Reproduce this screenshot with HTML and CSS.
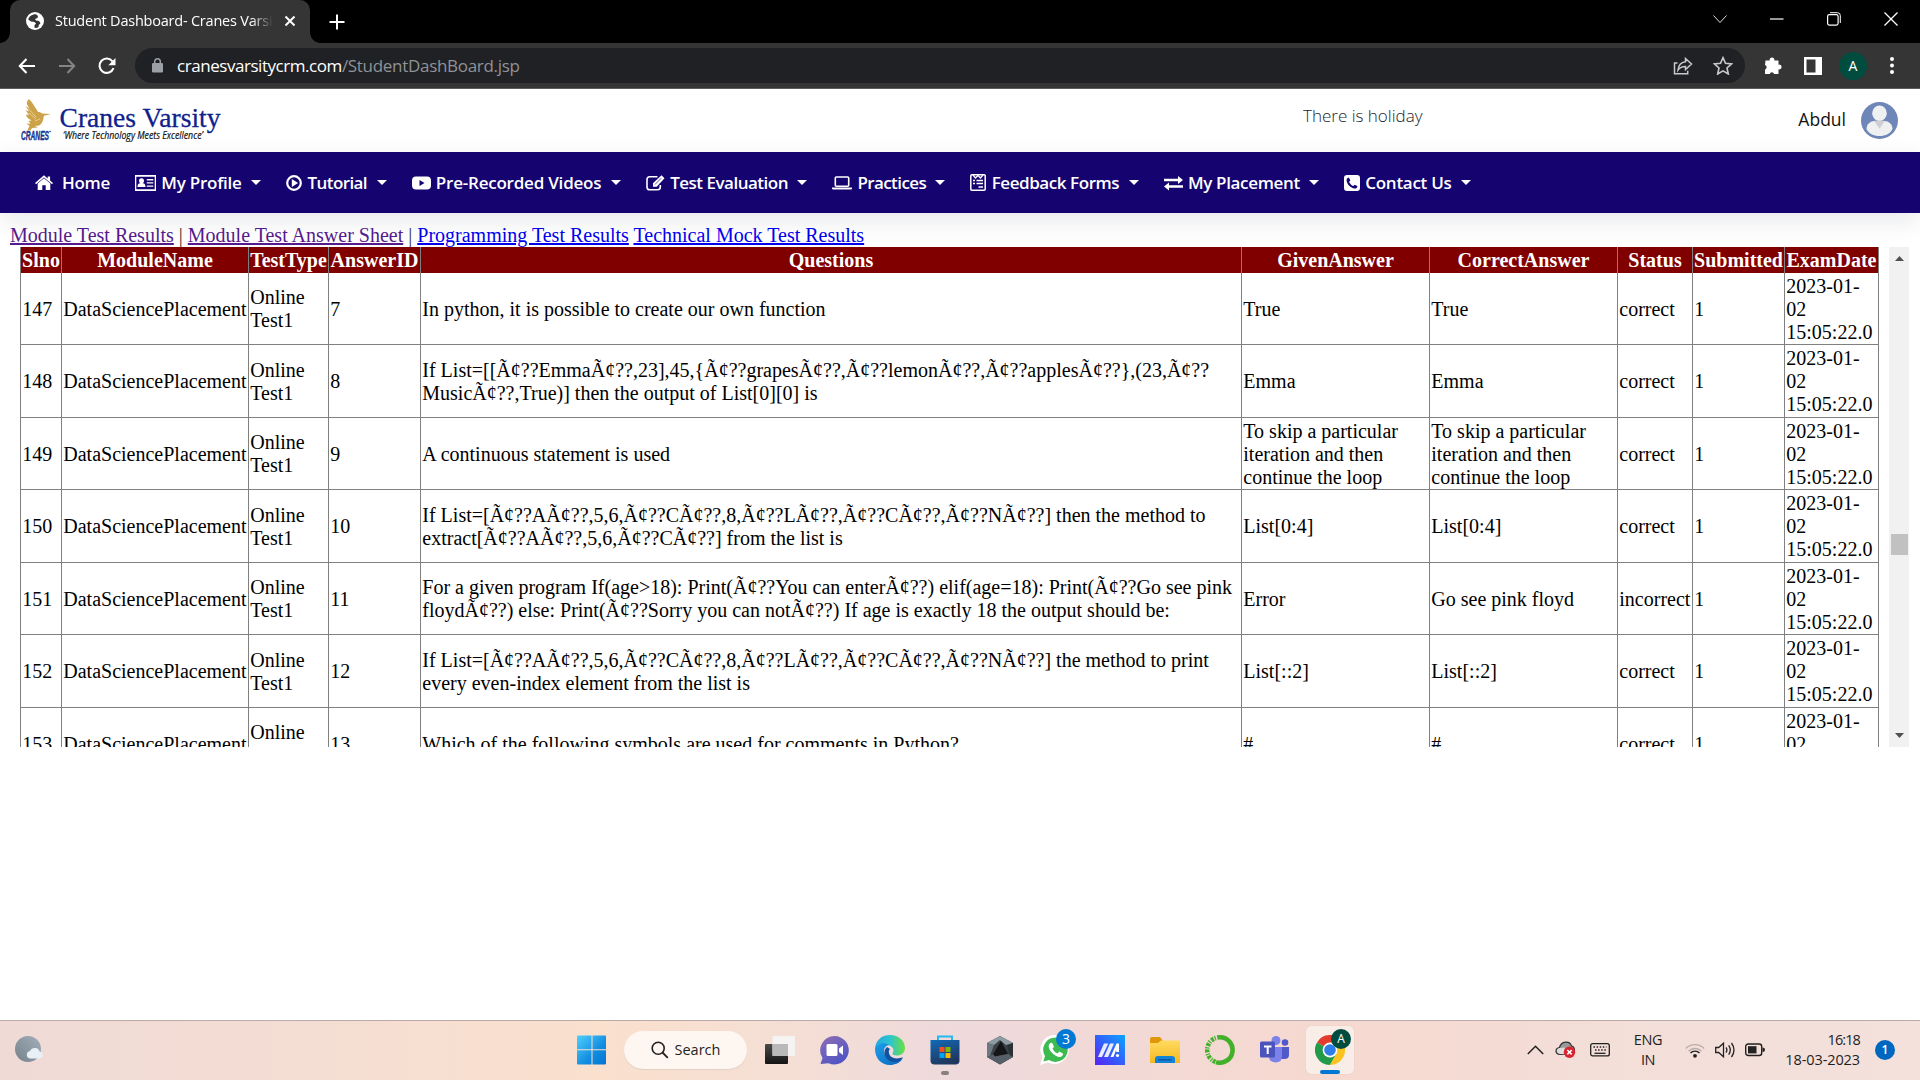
FILE: index.html
```html
<!DOCTYPE html>
<html lang="en">
<head>
<meta charset="utf-8">
<title>Student Dashboard- Cranes Varsity</title>
<link rel="stylesheet" href="styles.css">
</head>
<body>
<div class="tabstrip">
  <div class="tab">
    <svg class="favicon" width="18" height="18" viewBox="0 0 18 18"><circle cx="9" cy="9" r="9" fill="#fff"/><path d="M10 2.200C6 2 3 4.400 2.200 7.500L5 9.500l3.500.5 1.500 1.500-1.500 1.800v2.500c1.500.3 3 0 4-.8l.3-2 1.700-1.700-1.500-2.300-3-.5-1-1.500 2.500-1L12 4z" fill="#353535"/></svg>
    <span class="tab-title">Student Dashboard- Cranes Varsity</span>
    <svg class="tab-close" width="12" height="12" viewBox="0 0 12 12"><path d="M1.500 1.500l9 9M10.500 1.500l-9 9" stroke="#fff" stroke-width="2"/></svg>
  </div>
  <svg class="new-tab" width="16" height="16" viewBox="0 0 16 16"><path d="M8 .5v15M.5 8h15" stroke="#fff" stroke-width="2"/></svg>
  <div class="window-buttons">
    <svg width="14" height="14" viewBox="0 0 14 14"><path d="M.5 3.500L7 10.500l6.500-7" stroke="#ddd" fill="none"/></svg>
    <svg width="14" height="14" viewBox="0 0 14 14"><path d="M0 7h13.500" stroke="#fff" stroke-width="1.200"/></svg>
    <svg width="14" height="14" viewBox="0 0 14 14"><rect x=".6" y="2.600" width="10.500" height="10.500" rx="1.800" stroke="#fff" stroke-width="1.200" fill="none"/><path d="M3 .7h7.500q2.800 0 2.800 2.800V11" stroke="#fff" fill="none"/></svg>
    <svg width="14" height="14" viewBox="0 0 14 14"><path d="M.5.500l13 13M13.500.500l-13 13" stroke="#fff" stroke-width="1.300"/></svg>
  </div>
</div>
<div class="toolbar">
  <div class="nav-buttons">
    <svg width="18" height="16" viewBox="0 0 18 16"><path d="M17 8H2M8.500 1L1.800 8l6.700 7" stroke="#fff" stroke-width="2.100" fill="none"/></svg>
    <svg width="18" height="16" viewBox="0 0 18 16"><path d="M1 8h15M9.500 1l6.700 7-6.700 7" stroke="#858585" stroke-width="2" fill="none"/></svg>
    <svg width="18" height="18" viewBox="0 0 18 18"><path d="M15.500 11.200A7.200 7.200 0 1 1 14.600 4.500" stroke="#fff" stroke-width="2.100" fill="none"/><path d="M17.500 1v7.200h-7.200z" fill="#fff"/></svg>
  </div>
  <div class="omnibox">
    <svg class="lock" width="11" height="15" viewBox="0 0 11 15"><rect y="5" width="11" height="9.500" rx="1.200" fill="#9aa0a6"/><path d="M2.700 6V3.600a2.800 2.800 0 0 1 5.600 0V6" stroke="#9aa0a6" stroke-width="1.500" fill="none"/></svg>
    <span class="host">cranesvarsitycrm.com</span><span class="path">/StudentDashBoard.jsp</span>
    <svg class="share" width="20" height="18" viewBox="0 0 20 18"><path d="M4.500 6H1.500v10.800h13.200v-3" stroke="#c7c9cc" stroke-width="1.500" fill="none"/><path d="M12.500 1.500l6 5.500-6 5.500V9.500C9 9.500 6.800 10.500 5 13c.4-4.500 3-7.500 7.500-8.200z" stroke="#c7c9cc" stroke-width="1.500" fill="none"/></svg>
    <svg width="20" height="19" viewBox="0 0 20 19"><path d="M10 1.700l2.500 5.600 6.100.6-4.600 4.100 1.300 6L10 14.900 4.700 18 6 12 1.400 7.900l6.100-.6z" stroke="#c7c9cc" stroke-width="1.600" fill="none"/></svg>
  </div>
  <div class="extensions">
    <svg width="18" height="18" viewBox="0 0 18 18"><path d="M1.500 3.500h4.200a2.400 2.400 0 1 1 4.600 0h4.200v4.200a2.400 2.400 0 1 1 0 4.600V17h-4.400a2.300 2.300 0 0 0-4.400 0H1v-4.600a2.300 2.300 0 0 0 0-4.400z" fill="#fff"/></svg>
    <svg width="18" height="18" viewBox="0 0 18 18"><path d="M0 0h18v18H0zM2.500 2.500v13h9v-13z" fill="#fff" fill-rule="evenodd"/></svg>
    <span class="profile">A</span>
    <svg width="4" height="17" viewBox="0 0 4 17"><circle cx="2" cy="2" r="2" fill="#fff"/><circle cx="2" cy="8.500" r="2" fill="#fff"/><circle cx="2" cy="15" r="2" fill="#fff"/></svg>
  </div>
</div>

<header class="brand-bar">
  <svg class="logo" width="210" height="60" viewBox="0 0 210 60">
    <path d="M9 9c3 3 6 8 9 13 2 0 3 .5 4 1.500l9 .5-7 1.800c-1 3.200-.5 5.500-3 8.200-2 2.300-4 1.500-6 2l3 1.500-6 .5-1.500 2.500-3-.5 2-4-3-2.500 4 .2-2-2.700 3-.4c-3-2-5-3-5.500-6l3 .5-3.500-5 3.500 1.500-3-5 3.200 1.500C5.500 13 7 11 9 9z" fill="#cda349"/><path d="M8 18l8 9M9 23l7 6M15 31l5-2" stroke="#e9d7a8" stroke-width=".8"/>
    <text x="1" y="50" class="logo-mark" textLength="28" lengthAdjust="spacingAndGlyphs">CRANES</text>
    <circle cx="30" cy="41.500" r=".8" fill="#153391"/>
    <text x="39.500" y="36.500" class="logo-name" textLength="161" lengthAdjust="spacingAndGlyphs">Cranes Varsity</text>
    <text x="43" y="49" class="logo-tag" textLength="140" lengthAdjust="spacingAndGlyphs">‘Where Technology Meets Excellence’</text>
  </svg>
  <div class="marquee">There is holiday</div>
  <div class="user">
    <span>Abdul</span>
    <svg width="37" height="37" viewBox="0 0 37 37"><circle cx="18.500" cy="18.500" r="18.500" fill="#6f86b9"/><ellipse cx="18.500" cy="11.300" rx="7.300" ry="7.800" fill="#eef0f2"/><path d="M5.500 27c0-5 4-8 8-8h10c4 0 8 3 8 8-2 4.500-7 7-13 7s-11-2.500-13-7z" fill="#eef0f2"/><path d="M13 18.800h11l-5.500 8z" fill="#cfcfd1"/></svg>
  </div>
</header>

<nav class="menu">
  <a class="item home"><svg width="18" height="16" viewBox="0 0 18 16"><path d="M9 3.200l6.300 5.400V15h-4.600v-4.700H7.300V15H2.700V8.600z"/><path d="M9 .3l3.700 3.200V1.500h2.400v4.100L18 8.100l-1 1.200-8-6.900-8 6.900L0 8.100z"/></svg><span>Home</span></a>
  <a class="item prof"><svg width="21" height="16" viewBox="0 0 21 16"><path d="M0 0h21v16H0zM1.300 1.800v12.400h18.400V1.800z" fill-rule="evenodd"/><circle cx="6.500" cy="5.800" r="2.500"/><path d="M2.500 12c0-3.200 1.500-4 4-4s4 .8 4 4zM11.800 4h6.500v1.400h-6.500zM11.800 7.200h6.500v1.400h-6.500zM11.800 10.400h6.500v1.400h-6.500z"/></svg><span>My Profile</span><i></i></a>
  <a class="item tuto"><svg width="16" height="16" viewBox="0 0 16 16"><circle cx="8" cy="8" r="6.800" fill="none" stroke="#fff" stroke-width="2.200"/><path d="M5.800 4l6.300 4-6.300 4z"/></svg><span>Tutorial</span><i></i></a>
  <a class="item vide"><svg width="19" height="16" viewBox="0 0 19 16"><path d="M4 1.500h11q4 0 4 4v5q0 4-4 4H4q-4 0-4-4v-5q0-4 4-4zM7.500 5v6l5-3z" fill-rule="evenodd"/></svg><span>Pre-Recorded Videos</span><i></i></a>
  <a class="item eval"><svg width="19" height="16" viewBox="0 0 19 16"><path d="M11.500 1.800H3.800Q1 1.800 1 4.600v7.300Q1 14.800 3.800 14.800h7.700q2.800 0 2.800-2.800v-2" fill="none" stroke="#fff" stroke-width="1.600"/><path d="M15.500.3l3 3-7.800 8.400H7V8.300z"/><path d="M9 9.500l6.200-6.300" stroke="#15036f" stroke-width=".7"/></svg><span>Test Evaluation</span><i></i></a>
  <a class="item prac"><svg width="20" height="16" viewBox="0 0 20 16"><rect x="3.300" y="2" width="13.400" height="9.300" rx="1" fill="none" stroke="#fff" stroke-width="1.600"/><path d="M0 12.500h20v1.200q0 .8-1.500.8h-17Q0 14.500 0 13.700z"/></svg><span>Practices</span><i></i></a>
  <a class="item feed"><svg width="16" height="17" viewBox="0 0 16 17"><rect x=".8" y=".8" width="14.400" height="15.400" rx="1" fill="none" stroke="#fff" stroke-width="1.500"/><path d="M3 1l2.500 3L8 1.500 10.500 4 13 1M3 6.500h2M6.500 6.500H13M3 9.500h2M6.500 9.500H13M8.500 13H13" fill="none" stroke="#fff" stroke-width="1.300"/></svg><span>Feedback Forms</span><i></i></a>
  <a class="item plac"><svg width="19" height="16" viewBox="0 0 19 16"><path d="M0 3.800h14V1l5 4-5 4V6.200H0zM19 10.300H5V7.500l-5 4 5 4v-2.800h14z"/></svg><span>My Placement</span><i></i></a>
  <a class="item cont"><svg width="16" height="16" viewBox="0 0 16 16"><path d="M3 0h10q3 0 3 3v10q0 3-3 3H3q-3 0-3-3V3q0-3 3-3zM4.800 2.500C3 3 2.500 4 2.600 5.500c.5 4 4 7.500 8 8 1.500.1 2.500-.8 2.900-2.300L10.800 9.700 9.300 11C7.500 10.200 6 8.700 5.100 6.900L6.300 5.300z" fill-rule="evenodd"/></svg><span>Contact Us</span><i></i></a>
</nav>

<main class="page">
  <div class="links"><a class="visited">Module Test Results</a> | <a class="visited">Module Test Answer Sheet</a> | <a>Programming Test Results</a> <a>Technical Mock Test Results</a></div>
  <div class="scroller">
    <table class="results">
      <colgroup><col class="c-sl"><col class="c-mod"><col class="c-type"><col class="c-aid"><col class="c-q"><col class="c-ans"><col class="c-ans"><col class="c-st"><col class="c-sub"><col class="c-date"></colgroup>
      <thead><tr><th>Slno</th><th>ModuleName</th><th>TestType</th><th>AnswerID</th><th>Questions</th><th>GivenAnswer</th><th>CorrectAnswer</th><th>Status</th><th>Submitted</th><th>ExamDate</th></tr></thead>
      <tbody>
        <tr><td>147</td><td>DataSciencePlacement</td><td>Online<br>Test1</td><td>7</td><td>In python, it is possible to create our own function</td><td>True</td><td>True</td><td>correct</td><td>1</td><td>2023-01-<br>02<br>15:05:22.0</td></tr>
        <tr><td>148</td><td>DataSciencePlacement</td><td>Online<br>Test1</td><td>8</td><td>If List=[[Ã¢??EmmaÃ¢??,23],45,{Ã¢??grapesÃ¢??,Ã¢??lemonÃ¢??,Ã¢??applesÃ¢??},(23,Ã¢??<br>MusicÃ¢??,True)] then the output of List[0][0] is</td><td>Emma</td><td>Emma</td><td>correct</td><td>1</td><td>2023-01-<br>02<br>15:05:22.0</td></tr>
        <tr><td>149</td><td>DataSciencePlacement</td><td>Online<br>Test1</td><td>9</td><td>A continuous statement is used</td><td>To skip a particular<br>iteration and then<br>continue the loop</td><td>To skip a particular<br>iteration and then<br>continue the loop</td><td>correct</td><td>1</td><td>2023-01-<br>02<br>15:05:22.0</td></tr>
        <tr><td>150</td><td>DataSciencePlacement</td><td>Online<br>Test1</td><td>10</td><td>If List=[Ã¢??AÃ¢??,5,6,Ã¢??CÃ¢??,8,Ã¢??LÃ¢??,Ã¢??CÃ¢??,Ã¢??NÃ¢??] then the method to<br>extract[Ã¢??AÃ¢??,5,6,Ã¢??CÃ¢??] from the list is</td><td>List[0:4]</td><td>List[0:4]</td><td>correct</td><td>1</td><td>2023-01-<br>02<br>15:05:22.0</td></tr>
        <tr><td>151</td><td>DataSciencePlacement</td><td>Online<br>Test1</td><td>11</td><td>For a given program If(age&gt;18): Print(Ã¢??You can enterÃ¢??) elif(age=18): Print(Ã¢??Go see pink<br>floydÃ¢??) else: Print(Ã¢??Sorry you can notÃ¢??) If age is exactly 18 the output should be:</td><td>Error</td><td>Go see pink floyd</td><td>incorrect</td><td>1</td><td>2023-01-<br>02<br>15:05:22.0</td></tr>
        <tr><td>152</td><td>DataSciencePlacement</td><td>Online<br>Test1</td><td>12</td><td>If List=[Ã¢??AÃ¢??,5,6,Ã¢??CÃ¢??,8,Ã¢??LÃ¢??,Ã¢??CÃ¢??,Ã¢??NÃ¢??] the method to print<br>every even-index element from the list is</td><td>List[::2]</td><td>List[::2]</td><td>correct</td><td>1</td><td>2023-01-<br>02<br>15:05:22.0</td></tr>
        <tr><td>153</td><td>DataSciencePlacement</td><td>Online<br>Test1</td><td>13</td><td>Which of the following symbols are used for comments in Python?</td><td>#</td><td>#</td><td>correct</td><td>1</td><td>2023-01-<br>02<br>15:05:22.0</td></tr>
      </tbody>
    </table>
    <div class="scrollbar">
      <svg width="9" height="5" viewBox="0 0 9 5"><path d="M0 5L4.500 0 9 5z" fill="#505050"/></svg>
      <div class="thumb"></div>
      <svg width="9" height="5" viewBox="0 0 9 5"><path d="M0 0L4.500 5 9 0z" fill="#505050"/></svg>
    </div>
  </div>
</main>

<footer class="taskbar">
  <svg class="weather" width="29" height="27" viewBox="0 0 29 27"><defs><linearGradient id="w" x1="1" y1="0" x2="0" y2="1"><stop offset="0" stop-color="#a3b0ba"/><stop offset="1" stop-color="#75818b"/></linearGradient></defs><circle cx="13" cy="13" r="13" fill="url(#w)"/><path d="M15 22.500a3.800 3.800 0 0 1 0-7.500 5.300 5.300 0 0 1 9.800.8 3.400 3.400 0 0 1 .2 6.700z" fill="#e9f0f5"/></svg>
  <div class="apps">
    <svg class="app" width="30" height="30" viewBox="0 0 30 30"><defs><linearGradient id="s" x1="0" y1="0" x2="1" y2="1"><stop offset="0" stop-color="#4fd0ff"/><stop offset=".6" stop-color="#138de0"/><stop offset="1" stop-color="#0473d2"/></linearGradient></defs><path d="M1 .5h13.500v13.800H0V1.500q0-1 1-1zM15.500.500H28q1 0 1 1v12.800H15.500zM0 15.300h14.500v14.200H1q-1 0-1-1zM15.500 15.300H29v13.200q0 1-1 1H15.500z" fill="url(#s)"/></svg>
    <div class="search"><svg width="18" height="18" viewBox="0 0 18 18"><circle cx="7.200" cy="7.200" r="6" fill="none" stroke="#222" stroke-width="1.600"/><path d="M11.500 11.500l5.300 5.300" stroke="#222" stroke-width="1.800"/></svg><span>Search</span></div>
    <svg class="app" width="30" height="30" viewBox="0 0 30 30"><defs><linearGradient id="tv" x1="0" y1="0" x2="0" y2="1"><stop offset="0" stop-color="#4a4a48"/><stop offset="1" stop-color="#141414"/></linearGradient></defs><rect y="9" width="23" height="20" rx="1" fill="url(#tv)"/><rect x="7.500" y="1" width="22.500" height="20" rx="1" fill="#f6f4f2"/><path d="M7.500 9H23v12H7.500z" fill="#b9b9b9"/></svg>
    <svg class="app" width="30" height="30" viewBox="0 0 30 30"><defs><linearGradient id="ch" x1="0" y1="0" x2=".6" y2="1"><stop offset="0" stop-color="#8f6fb5"/><stop offset="1" stop-color="#5054c4"/></linearGradient></defs><path d="M14.500 1a14.300 14.300 0 1 1-6 27.300L.5 29l2-6A14.300 14.300 0 0 1 14.500 1z" fill="url(#ch)"/><rect x="6.500" y="9" width="11" height="12" rx="1.500" fill="#fff"/><path d="M19 13.500l4-3v9.500l-4-3z" fill="#fff"/></svg>
    <svg class="app" width="30" height="30" viewBox="0 0 30 30"><defs><linearGradient id="e1"><stop offset="0" stop-color="#25a8e0"/><stop offset=".5" stop-color="#2bc4cf"/><stop offset="1" stop-color="#6ce03f"/></linearGradient><linearGradient id="e2" x1="0" y1="0" x2="1" y2="1"><stop offset="0" stop-color="#1c9fe8"/><stop offset="1" stop-color="#0c66bf"/></linearGradient></defs><path d="M0 15C0 6 6 0 15 0s15 6 15 13c0 5-4 7.500-8 7.500-3.500 0-5-1-4.500-2.500 2-2 1-6-3-7.500C8 8.500 2 11 0 15z" fill="url(#e1)"/><path d="M0 14C2 8 10 6.500 14 10c-6 1-6 8-3 12 4 5 11 5 17 1-3 5-8 7-13 7C6 30 0 23 0 14z" fill="url(#e2)"/><path d="M12 12c-6 6-1 15 8 15 3 0 6-1.500 8-5-7 3-13 1-14-4-.5-2 0-3 1-4z" fill="#1152a0"/></svg>
    <div class="app running"><svg width="30" height="30" viewBox="0 0 30 30"><defs><linearGradient id="st" x1="0" y1="0" x2=".4" y2="1"><stop offset="0" stop-color="#116bb9"/><stop offset="1" stop-color="#20375f"/></linearGradient></defs><path d="M8 5V1.500h14V5" fill="none" stroke="#26b9ef" stroke-width="2"/><path d="M.5 5h29v20.500q0 4-4 4h-21q-4 0-4-4z" fill="url(#st)"/><path d="M9.500 12h5v5h-5z" fill="#f25022"/><path d="M15.500 12h5v5h-5z" fill="#7fba00"/><path d="M9.500 18h5v5h-5z" fill="#00a4ef"/><path d="M15.500 18h5v5h-5z" fill="#ffb900"/></svg></div>
    <svg class="app" width="30" height="30" viewBox="0 0 30 30"><path d="M15 1l13 7v14l-13 7.500L2 22V8z" fill="#3b4147"/><path d="M15 1l13 7-7 2-6-5-6 5-7-2z" fill="#8f9ba4"/><path d="M2 8l7 2-4 11-3 1z" fill="#6d7881"/><path d="M28 8l-6 2.500 3 10.500 3 1z" fill="#2c3136"/><path d="M16 6l7 13-13 2.500-2-2z" fill="#131518"/><path d="M8 19.500L2 22l13 7.500 13-7.500-5-3-13 2.500z" fill="#565f67"/></svg>
    <div class="app"><svg width="30" height="30" viewBox="0 0 30 30"><path d="M15.500 0A14.500 14.500 0 1 1 8 27.500L0 30l2.500-8A14.500 14.500 0 0 1 15.500 0z" fill="#fff"/><path d="M15.500 2.500A12.200 12.200 0 1 1 9 25l-5.500 1.500L5 21A12.200 12.200 0 0 1 15.500 2.500z" fill="#3dbb50"/><path d="M10.500 8c-3 2-2 6 1.500 9.800 4 4.200 8.500 5.500 10.500 2.700 1-1.500.6-2-.5-2.600l-2.700-1.300-1.800 1.800c-2.500-1-4-2.500-5-4.800l1.500-1.600-1.300-3.200c-.5-1-1.200-1.200-2.200-.8z" fill="#fff"/></svg><b class="badge">3</b></div>
    <svg class="app" width="30" height="30" viewBox="0 0 30 30"><defs><linearGradient id="ma" x1="0" y1="1" x2="1" y2="0"><stop offset="0" stop-color="#5a20f5"/><stop offset="1" stop-color="#0aa4ff"/></linearGradient></defs><path d="M0 0h30v30H0z" fill="url(#ma)"/><path d="M3 22L9 8.500h4.200L7 22zM9 22l6-13.500h4L13 22z" fill="#e9ecff"/><path d="M15.500 22l6-13.500H24V17h-2.800v-2.500L18.500 22z" fill="#fff"/><circle cx="22.500" cy="20.500" r="1.600" fill="#fff"/></svg>
    <svg class="app" width="30" height="30" viewBox="0 0 30 30"><defs><linearGradient id="fo" x1="0" y1="0" x2="0" y2="1"><stop offset="0" stop-color="#ffda60"/><stop offset="1" stop-color="#f5b91f"/></linearGradient></defs><path d="M0 4q0-2 2-2h8l3 4-4 4H0z" fill="#e0980b"/><path d="M0 8h8l3-2.500h17q2 0 2 2V28H0z" fill="url(#fo)"/><path d="M5 28v-4q0-3 3-3h14q3 0 3 3v4z" fill="#1583d5"/><path d="M8.500 24.800h13" stroke="#0a4d94" stroke-width="1.200"/></svg>
    <svg class="app" width="30" height="30" viewBox="0 0 30 30"><path d="M15 2.300a12.700 12.700 0 1 1-4 24.800" fill="none" stroke="#43b02a" stroke-width="4.600"/><path d="M15 2.300A12.700 12.700 0 0 0 11 27.100" fill="none" stroke="#43b02a" stroke-width="4.600" stroke-dasharray="2.800 1.500 1.200 1"/></svg>
    <svg class="app" width="30" height="30" viewBox="0 0 30 30"><circle cx="25" cy="7.500" r="3.300" fill="#5059c9"/><circle cx="16" cy="5.500" r="4.500" fill="#7b83eb"/><path d="M20 12h9v8q0 4-4.500 4H20z" fill="#5059c9"/><path d="M9 12h13v9q0 6.500-6.500 6.500T9 21z" fill="#7b83eb"/><rect y="6.500" width="15" height="16" rx="1.500" fill="#4b53bc"/><path d="M4 10.500h7.500v2H8.700v6.500H6.700v-6.500H4z" fill="#fff"/></svg>
    <div class="app active"><svg width="30" height="30" viewBox="0 0 30 30"><path d="M15 15L2 7.500A15 15 0 0 1 28 7.500z" fill="#e33b2e"/><path d="M2 7.500A15 15 0 0 0 15 30l6.500-11.200L15 15z" fill="#219a4a"/><path d="M15 7.500h13A15 15 0 0 1 15 30l6.500-11.200z" fill="#fcc31e"/><circle cx="15" cy="15" r="7.400" fill="#fff"/><circle cx="15" cy="15" r="5.800" fill="#2f7de9"/></svg><b class="badge account">A</b></div>
  </div>
  <div class="tray">
    <svg class="chev" width="17" height="10" viewBox="0 0 17 10"><path d="M.8 9L8.500 1.200 16.200 9" fill="none" stroke="#222" stroke-width="1.500"/></svg>
    <svg class="cloud" width="21" height="17" viewBox="0 0 21 17"><path d="M5 13.500C-.5 13 0 7 4.500 6.500 6-.5 15-.5 16.500 5q3 .5 3 4.500l-5 4z" fill="#999" stroke="#333" stroke-width="1.200"/><path d="M5 13C1 12 1 8 4.500 7l5-.5 4 7z" fill="#ddd"/><circle cx="14.500" cy="11.200" r="5.700" fill="#da2430"/><path d="M12.300 9l4.400 4.400M16.700 9l-4.400 4.400" stroke="#fff" stroke-width="1.500"/></svg>
    <svg class="kbd" width="20" height="14" viewBox="0 0 20 14"><rect x=".7" y=".7" width="18.600" height="12.200" rx="2" fill="none" stroke="#222" stroke-width="1.300"/><path d="M3.500 4h13M5 7h11" stroke="#222" stroke-width="1.500" stroke-dasharray="1.500 1.600"/><path d="M4.500 10.300h11" stroke="#222" stroke-width="1.300"/></svg>
    <div class="lang">ENG<br>IN</div>
    <svg class="wifi" width="20" height="16" viewBox="0 0 20 16"><path d="M.8 6.500a13 13 0 0 1 18.400 0M3.500 9.300a9 9 0 0 1 13 0" fill="none" stroke="#b9adaa" stroke-width="1.300"/><path d="M5.500 11a6.300 6.300 0 0 1 9 0" fill="none" stroke="#222" stroke-width="1.400"/><circle cx="10" cy="13.800" r="1.900" fill="#222"/></svg>
    <svg class="vol" width="20" height="16" viewBox="0 0 20 16"><path d="M.7 5.500h3L8.500 1.200v13.600L3.700 10.500h-3z" fill="none" stroke="#222" stroke-width="1.300"/><path d="M11 5.500q1.800 2.500 0 5M13.700 3.300q3.200 4.700 0 9.400M16.500 1q5 7 0 14" fill="none" stroke="#222" stroke-width="1.300"/></svg>
    <svg class="batt" width="20" height="14" viewBox="0 0 20 14"><rect x=".7" y="1" width="16" height="11.500" rx="2.500" fill="none" stroke="#222" stroke-width="1.400"/><rect x="3" y="3.200" width="8.500" height="7.200" fill="#222"/><path d="M17.500 4.500q2.500 0 2.500 2.300T17.500 9z" fill="#222"/></svg>
    <div class="clock"><span class="time">16:18</span><span>18-03-2023</span></div>
    <b class="count">1</b>
  </div>
</footer>
</body>
</html>
```
FILE: styles.css
```css
* { box-sizing: border-box; }
svg { display: block; flex: none; }
body {
  margin: 0;
  width: 1920px;
  height: 1080px;
  overflow: hidden;
  display: flex;
  flex-direction: column;
  background: #fff;
  font-family: "Open Sans", "Noto Sans", sans-serif;
}

/* browser chrome */
.tabstrip { height: 43px; flex: none; background: #000; display: flex; align-items: center; padding-left: 10px; }
.tab {
  width: 300px; height: 43px; background: #353535; border-radius: 10px 10px 0 0;
  display: flex; align-items: center; padding: 0 14px 0 16px; position: relative;
}
.tab > * { margin-bottom: 2px; }
.tab::before, .tab::after {
  content: ""; position: absolute; bottom: 0; width: 10px; height: 10px; margin: 0;
}
.tab::before { left: -10px; background: radial-gradient(circle at 0 0, #000 9.5px, #353535 10px); }
.tab::after { right: -10px; background: radial-gradient(circle at 100% 0, #000 9.5px, #353535 10px); }
.tab-title {
  flex: 1; margin: 0 11px 2px 11px; overflow: hidden; white-space: nowrap; color: #fff;
  font-size: 14.5px; letter-spacing: -0.22px; line-height: 22px;
  -webkit-mask-image: linear-gradient(90deg, #000 90%, transparent);
  mask-image: linear-gradient(90deg, #000 90%, transparent);
}
.new-tab { margin-left: 19px; }
.window-buttons { margin-left: auto; display: flex; gap: 43px; padding-right: 22px; margin-bottom: 6px; }
.toolbar {
  height: 46px; flex: none; background: #353535; border-bottom: 1px solid #5c5c5c;
  display: flex; align-items: center;
}
.nav-buttons { display: flex; align-items: center; gap: 22px; padding-left: 18px; width: 135px; }
.omnibox {
  width: 1610px; height: 35px; border-radius: 18px; background: #202124;
  display: flex; align-items: center; padding: 0 12px 0 17px; font-size: 17px; color: #8f9398;
}
.lock { margin-right: 14px; }
.host { color: #fff; letter-spacing: -0.45px; }
.path { letter-spacing: -0.3px; }
.share { margin-left: auto; margin-right: 20px; }
.extensions { display: flex; align-items: center; padding-left: 19px; gap: 22px; }
.profile {
  width: 28px; height: 28px; border-radius: 50%; background: #004d40; color: #fff;
  font-size: 14px; line-height: 28px; text-align: center; margin: 0 1px 0 -5px;
}

/* site header */
.brand-bar { height: 63px; flex: none; display: flex; align-items: center; padding: 0 22px 0 20px; }
.logo { margin-top: -1px; }
.logo-mark { font: italic bold 12px "Liberation Sans", sans-serif; fill: #153391; stroke: #153391; stroke-width: .4px; }
.logo-name { font: 28px "Liberation Serif", serif; fill: #10218b; stroke: #10218b; stroke-width: .3px; }
.logo-tag { font: italic 10.5px "Open Sans", sans-serif; fill: #111; stroke: #111; stroke-width: .2px; }
.marquee {
  margin-left: 1073px; width: 120px; overflow: hidden; white-space: nowrap;
  font-size: 17px; font-weight: 300; color: #212529; line-height: 24px; margin-bottom: 9px;
}
.user { margin-left: auto; display: flex; align-items: center; gap: 15px; font-size: 17.5px; color: #111; }
.user span { margin-bottom: 4px; }

.menu {
  height: 61px; flex: none; background: #15036f; color: #fff; display: flex; align-items: center; gap: 25px;
  padding-left: 35px; font-size: 17px; font-weight: 600; box-shadow: 0 8px 24px rgba(30, 40, 60, .1);
}
.item { display: flex; align-items: center; gap: 5.3px; fill: #fff; height: 24px; line-height: 24px; white-space: nowrap; }
.item i { border: 5px solid transparent; border-top-color: #fff; border-bottom: 0; margin-left: 4.7px; }
.home { gap: 9px; }
.home span { width: 48px; letter-spacing: -0.3px; }
.prof span { width: 80px; letter-spacing: -0.25px; }
.tuto span { width: 59px; letter-spacing: -0.6px; }
.vide span { width: 165px; letter-spacing: -0.22px; }
.eval span { width: 117px; letter-spacing: -0.5px; }
.prac span { width: 68px; letter-spacing: -0.6px; }
.feed span { width: 127px; letter-spacing: -0.43px; }
.plac span { width: 111px; letter-spacing: -0.35px; }
.cont span { width: 86px; letter-spacing: -0.28px; }

/* results */
.page { flex: 1; font: 20px/23px "Liberation Serif", serif; color: #000; }
.links { padding: 11px 0 0 10px; height: 34px; color: #333; }
.links a { color: #0000ee; text-decoration: underline; }
.links a.visited { color: #551a8b; }
.scroller { height: 500px; overflow: hidden; display: flex; justify-content: space-between; padding: 0 11px 0 20px; }
.results { table-layout: fixed; width: 1859px; border-collapse: separate; border-spacing: 0; border-left: 1px solid #808080; align-self: flex-start; }
.c-sl { width: 41px; } .c-mod { width: 187px; } .c-type { width: 80px; } .c-aid { width: 92px; }
.c-q { width: 821px; } .c-ans { width: 188px; } .c-st { width: 75px; } .c-sub { width: 92px; } .c-date { width: 94px; }
.results th { height: 26px; padding: 0; background: #800000; color: #fff; border-right: 1px solid #808080; white-space: nowrap; }
.results td { height: 73px; padding: 1px 0 0 1.3px; border-right: 1px solid #808080; border-bottom: 1px solid #808080; white-space: nowrap; }
.results tbody tr:nth-child(odd) td { height: 72px; }
.scrollbar { width: 20px; background: #f1f1f1; display: flex; flex-direction: column; align-items: center; padding: 9px 0; }
.thumb { width: 17px; height: 21px; background: #c1c1c1; margin: 273px 0 auto; }

/* taskbar */
.taskbar {
  height: 60px; flex: none; border-top: 1px solid #b9aba7; position: relative;
  background: linear-gradient(90deg, #efdad6 0, #f4ddd3 300px, #fae0cd 600px, #f4ded5 800px, #eed9dc 960px, #f3d9d5 1130px, #f6d9d0 1350px, #f3ded8 1600px, #f4e1dc 1920px);
  display: flex; align-items: center; padding: 0 25px 2px 15px;
}
.weather { margin-right: 533px; }
.apps { display: flex; align-items: center; gap: 25px; }
.app { width: 30px; height: 30px; position: relative; }
.search {
  width: 123px; height: 38px; border-radius: 19px; background: #fef6f1; box-shadow: 0 1px 1px #e2cfc3;
  display: flex; align-items: center; justify-content: center; gap: 6px; font-size: 14.5px; color: #1f1f1f; margin: 0 -7px 0 -8px;
}
.running::after { content: ""; position: absolute; left: 11px; top: 36px; width: 8px; height: 4px; border-radius: 2px; background: #8a8080; }
.badge {
  position: absolute; left: 16px; top: -6px; width: 20px; height: 20px; border-radius: 50%;
  background: #0078d4; color: #fff; font: 14px/20px "Open Sans", sans-serif; text-align: center;
}
.account { background: #004d40; font-size: 12px; }
.active::before { content: ""; position: absolute; left: -9px; top: -9px; width: 48px; height: 48px; border-radius: 5px; background: #f9ede8; box-shadow: 0 0 1px #cdb9b2; }
.active::after { content: ""; position: absolute; left: 5px; top: 35px; width: 20px; height: 4px; border-radius: 2px; background: #0078d4; }
.active svg { position: relative; }
.tray { margin-left: auto; display: flex; align-items: center; font-size: 14.5px; line-height: 20px; color: #1f1f1f; }
.cloud { margin-left: 11px; }
.kbd { margin-left: 14px; }
.lang { width: 32px; margin: 0 21px 0 22px; text-align: center; letter-spacing: -0.4px; }
.vol { margin: 0 10px; }
.clock { width: 80px; margin: 0 1px 0 15px; display: flex; flex-direction: column; align-items: flex-end; letter-spacing: -0.1px; }
.time { letter-spacing: -0.9px; }
.count {
  width: 20px; height: 20px; border-radius: 50%; background: #0067c0; color: #fff; margin-left: 14px;
  font: 600 12px/20px "Open Sans", sans-serif; text-align: center;
}
```
